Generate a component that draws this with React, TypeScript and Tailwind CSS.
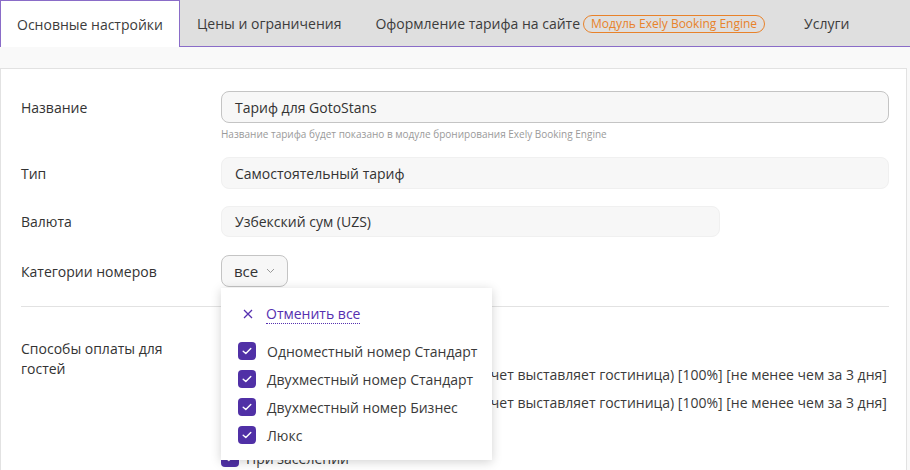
import React from "react";

const Check = () => (
  <span className="flex h-[18px] w-[18px] shrink-0 items-center justify-center rounded-[4px] bg-[#5030a6]">
    <svg width="12" height="12" viewBox="0 0 12 12" fill="none">
      <path d="M2.2 6.2 L4.8 8.6 L9.8 3.4" stroke="#fff" strokeWidth="1.4" strokeLinecap="round" strokeLinejoin="round" />
    </svg>
  </span>
);

export default function App() {
  const cats = [
    "Одноместный номер Стандарт",
    "Двухместный номер Стандарт",
    "Двухместный номер Бизнес",
    "Люкс",
  ];
  const pays = [
    "Банковской картой",
    "Оплата по безналичному расчету (счет выставляет гостиница) [100%] [не менее чем за 3 дня]",
    "Оплата по безналичному расчету (счет выставляет гостиница) [100%] [не менее чем за 3 дня]",
    "Наличными",
    "При заселении",
  ];
  return (
    <div
      className="h-[470px] w-[910px] overflow-hidden bg-[#f9f9f9] text-[#333]"
      style={{ fontFamily: '"Open Sans", "Noto Sans", sans-serif' }}
    >
      {/* Tabs */}
      <div className="flex h-[47px] items-stretch bg-[#dfdfdf] text-[14px] text-[#3c3c3c]">
        <div className="flex items-center border-x border-t border-[#8a6cc8] bg-white px-[16px] pt-[1px]">
          Основные настройки
        </div>
        <div className="flex flex-1 items-stretch border-b border-[#8a6cc8] pt-[1px]">
          <div className="flex items-center pl-[17px] pr-[16px]">Цены и ограничения</div>
          <div className="flex items-center pl-[18px] pr-[17px]">
            Оформление тарифа на сайте
            <span className="ml-[3px] flex h-[18px] items-center rounded-full border border-[#e8822a] px-[7px] text-[12px] text-[#e8822a]">
              Модуль Exely Booking Engine
            </span>
          </div>
          <div className="flex items-center pl-[22px]">Услуги</div>
        </div>
      </div>

      {/* Card */}
      <div className="mt-[21px] h-[420px] w-[907px] border-l border-r border-t border-[#e2e2e2] bg-white pl-[20px] pr-[17px] pt-[22px] text-[14px]">
        {/* Name */}
        <div className="flex">
          <div className="flex h-[32px] w-[200px] shrink-0 items-center">Название</div>
          <div className="flex-1">
            <div className="flex h-[32px] items-center rounded-[8px] border border-[#c4c4c4] bg-[#f7f7f7] px-[13px]">
              Тариф для GotoStans
            </div>
            <div className="mt-[4px] text-[10px] leading-[14px] text-[#9a9a9a]">
              Название тарифа будет показано в модуле бронирования Exely Booking Engine
            </div>
          </div>
        </div>

        {/* Type */}
        <div className="mt-[16px] flex">
          <div className="flex h-[32px] w-[200px] shrink-0 items-center">Тип</div>
          <div className="flex h-[32px] flex-1 items-center rounded-[8px] border border-[#f0f0f0] bg-[#f7f7f7] px-[13px]">
            Самостоятельный тариф
          </div>
        </div>

        {/* Currency */}
        <div className="mt-[17px] flex">
          <div className="flex h-[31px] w-[200px] shrink-0 items-center">Валюта</div>
          <div className="flex h-[31px] w-[499px] items-center rounded-[8px] border border-[#f0f0f0] bg-[#f7f7f7] px-[13px]">
            Узбекский сум (UZS)
          </div>
        </div>

        {/* Categories */}
        <div className="mt-[18px] flex">
          <div className="flex h-[32px] w-[200px] shrink-0 items-center">Категории номеров</div>
          <div className="relative">
            <div className="flex h-[32px] w-[67px] items-center rounded-[8px] border border-[#c4c4c4] bg-[#f7f7f7] pl-[12px] text-[15px]">
              все
              <svg className="ml-[8px]" width="9" height="6" viewBox="0 0 9 6" fill="none">
                <path d="M1 1 L4.5 4.5 L8 1" stroke="#999" strokeWidth="1" />
              </svg>
            </div>
            {/* Dropdown */}
            <div className="absolute left-0 top-[33px] z-10 h-[172px] w-[271px] bg-white pl-[17px] pt-[16px] shadow-[0_2px_10px_rgba(0,0,0,0.18)]">
              <div className="flex h-[20px] items-center text-[#5630b0]">
                <svg className="ml-[5px]" width="10" height="10" viewBox="0 0 10 10" fill="none">
                  <path d="M1 1 L9 9 M9 1 L1 9" stroke="#5630b0" strokeWidth="1.3" />
                </svg>
                <span className="ml-[13px] border-b border-dotted border-[#5630b0] leading-[18px]">
                  Отменить все
                </span>
              </div>
              <div className="mt-[13px]">
                {cats.map((c) => (
                  <div key={c} className="flex h-[28px] items-center gap-[11px] text-[#3a3a3a]">
                    <Check />
                    <span>{c}</span>
                  </div>
                ))}
              </div>
            </div>
          </div>
        </div>

        <div className="mt-[19px] h-px bg-[#e2e2e2]" />

        {/* Payment */}
        <div className="mt-[25px] flex">
          <div className="mt-[7px] w-[200px] shrink-0 pr-[40px] leading-[20px]">
            Способы оплаты для гостей
          </div>
          <div className="flex-1">
            {pays.map((p, i) => (
              <div key={i} className="flex h-[28px] items-center gap-[7px] whitespace-nowrap text-[#3a3a3a]">
                <Check />
                <span>{p}</span>
              </div>
            ))}
          </div>
        </div>
      </div>
    </div>
  );
}
